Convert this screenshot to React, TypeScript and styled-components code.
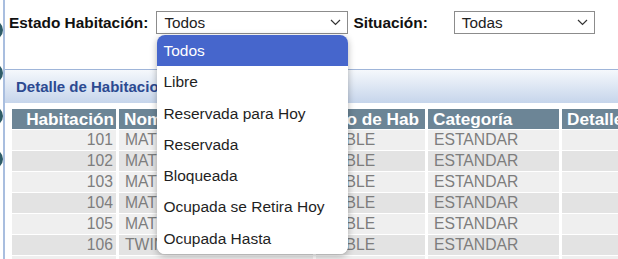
import React from 'react'
import styled, { createGlobalStyle } from 'styled-components'

const GlobalStyle = createGlobalStyle`
  html, body {
    margin: 0;
    padding: 0;
    background: #fff;
  }
  body {
    font-family: 'Liberation Sans', Arial, sans-serif;
    overflow: hidden;
  }
`

const Page = styled.div`
  display: flex;
  width: 618px;
  height: 259px;
  overflow: hidden;
`

const Rail = styled.div`
  flex: 0 0 3px;
  display: flex;
  flex-direction: column;
  gap: 23px;
  padding-top: 20px;
  overflow: hidden;
  border-right: 2px solid #a9bedf;
`

const RailDot = styled.span`
  flex: 0 0 20px;
  width: 20px;
  margin-left: -17px;
  border-radius: 50%;
  background: #2f5d68;
`

const Main = styled.div`
  flex: 1;
  min-width: 0;
  display: flex;
  flex-direction: column;
`

const FilterBar = styled.div`
  flex-shrink: 0;
  height: 69px;
  box-sizing: border-box;
  padding: 11px 0 0 4px;
  display: flex;
  align-items: flex-start;
  position: relative;
  z-index: 5;
`

const Label = styled.label<{ $gap: number }>`
  font-size: 15.4px;
  font-weight: bold;
  color: #111;
  line-height: 23px;
  margin-right: ${p => p.$gap}px;
  white-space: nowrap;
`

const Select = styled.div<{ $w: number; $gap?: number }>`
  position: relative;
  flex-shrink: 0;
  width: ${p => p.$w}px;
  height: 23px;
  box-sizing: border-box;
  border: 1px solid #8c8c8c;
  padding: 0 6px 0 7px;
  margin-right: ${p => p.$gap ?? 0}px;
  display: flex;
  align-items: center;
  justify-content: space-between;
  font-size: 15.3px;
  color: #222;
  background: #fff;
`

const Chevron = () => (
  <svg width="11" height="7" viewBox="0 0 11 7">
    <polyline points="1,1 5.5,5.5 10,1" fill="none" stroke="#333" strokeWidth="1.2" />
  </svg>
)

const Dropdown = styled.ul`
  position: absolute;
  top: 23px;
  left: 0;
  width: 191px;
  margin: 0;
  padding: 0;
  list-style: none;
  background: #fff;
  border-radius: 8px;
  overflow: hidden;
  box-shadow: 0 2px 7px rgba(0, 0, 0, 0.3);
`

const Option = styled.li<{ $active?: boolean }>`
  height: 31.3px;
  line-height: 31.3px;
  padding-left: 6px;
  font-size: 15.5px;
  white-space: nowrap;
  color: ${p => (p.$active ? '#fff' : '#1f1f1f')};
  background: ${p => (p.$active ? '#4666cc' : '#fff')};
`

const Panel = styled.section`
  flex-shrink: 0;
  border-top: 1px solid #9fb5d9;
  display: flex;
  flex-direction: column;
`

const PanelHead = styled.div`
  height: 33px;
  padding-left: 11px;
  display: flex;
  align-items: center;
  background: linear-gradient(#f5f8fc, #c6d5eb);
  font-size: 15px;
  font-weight: bold;
  color: #2c4a91;
  white-space: nowrap;
`

const TableWrap = styled.div`
  padding: 5px 0 0 4px;
`

const Grid = styled.table`
  border-collapse: separate;
  border-spacing: 3px 1px;
  table-layout: fixed;
  width: 656px;
`

const Th = styled.th<{ $num?: boolean }>`
  height: 20px;
  padding: ${p => (p.$num ? '0 2px 0 5px' : '0 5px')};
  background: #6c8596;
  color: #fff;
  font-size: 17.2px;
  font-weight: bold;
  line-height: 20px;
  text-align: ${p => (p.$num ? 'right' : 'left')};
  white-space: nowrap;
  overflow: hidden;
`

const Td = styled.td<{ $alt?: boolean; $num?: boolean }>`
  height: 20px;
  padding: ${p => (p.$num ? '0 3px 0 6px' : '0 6px')};
  font-size: 15.7px;
  line-height: 20px;
  color: #7d7d7d;
  background: ${p => (p.$alt ? '#e3e3e3' : '#efefef')};
  text-align: ${p => (p.$num ? 'right' : 'left')};
  white-space: nowrap;
  overflow: hidden;
`

const estados = [
  'Todos',
  'Libre',
  'Reservada para Hoy',
  'Reservada',
  'Bloqueada',
  'Ocupada se Retira Hoy',
  'Ocupada Hasta',
]

const habitaciones = [
  { num: '101', nombre: 'MATRIMONIAL', tipo: 'DOBLE', cat: 'ESTANDAR' },
  { num: '102', nombre: 'MATRIMONIAL', tipo: 'DOBLE', cat: 'ESTANDAR' },
  { num: '103', nombre: 'MATRIMONIAL', tipo: 'DOBLE', cat: 'ESTANDAR' },
  { num: '104', nombre: 'MATRIMONIAL', tipo: 'DOBLE', cat: 'ESTANDAR' },
  { num: '105', nombre: 'MATRIMONIAL', tipo: 'DOBLE', cat: 'ESTANDAR' },
  { num: '106', nombre: 'TWIN', tipo: 'DOBLE', cat: 'ESTANDAR' },
  { num: '107', nombre: 'TWIN', tipo: 'DOBLE', cat: 'ESTANDAR' },
]

export default function App() {
  return (
    <>
      <GlobalStyle />
      <Page>
        <Rail>
          <RailDot />
          <RailDot />
          <RailDot />
          <RailDot />
        </Rail>
        <Main>
          <FilterBar>
            <Label $gap={8}>Estado Habitación:</Label>
            <Select $w={192} $gap={5}>
              <span>Todos</span>
              <Chevron />
              <Dropdown>
                {estados.map((e, i) => (
                  <Option key={e} $active={i === 0}>
                    {e}
                  </Option>
                ))}
              </Dropdown>
            </Select>
            <Label $gap={26}>Situación:</Label>
            <Select $w={141}>
              <span>Todas</span>
              <Chevron />
            </Select>
          </FilterBar>

          <Panel>
            <PanelHead>Detalle de Habitaciones</PanelHead>
            <TableWrap>
              <Grid>
                <colgroup>
                  <col style={{ width: 104 }} />
                  <col style={{ width: 194 }} />
                  <col style={{ width: 109 }} />
                  <col style={{ width: 131 }} />
                  <col style={{ width: 100 }} />
                </colgroup>
                <thead>
                  <tr>
                    <Th $num>Habitación</Th>
                    <Th>Nombre</Th>
                    <Th>Tipo de Hab</Th>
                    <Th>Categoría</Th>
                    <Th>Detalle</Th>
                  </tr>
                </thead>
                <tbody>
                  {habitaciones.map((h, i) => (
                    <tr key={h.num}>
                      <Td $alt={i % 2 === 1} $num>{h.num}</Td>
                      <Td $alt={i % 2 === 1}>{h.nombre}</Td>
                      <Td $alt={i % 2 === 1}>{h.tipo}</Td>
                      <Td $alt={i % 2 === 1}>{h.cat}</Td>
                      <Td $alt={i % 2 === 1}></Td>
                    </tr>
                  ))}
                </tbody>
              </Grid>
            </TableWrap>
          </Panel>
        </Main>
      </Page>
    </>
  )
}
